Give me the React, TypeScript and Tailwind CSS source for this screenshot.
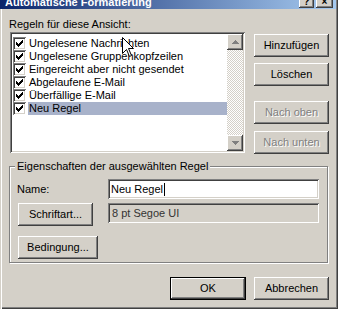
import React from "react";

const raised =
  "bg-[#d4d0c8] shadow-[inset_-1px_-1px_0_#404040,inset_1px_1px_0_#ffffff,inset_-2px_-2px_0_#808080]";

function Btn({
  children,
  className = "",
  disabled = false,
  def = false,
}: {
  children: React.ReactNode;
  className?: string;
  disabled?: boolean;
  def?: boolean;
}) {
  if (def) {
    return (
      <div className={`border border-black ${className}`}>
        <div
          className={`${raised} flex h-full w-full items-center justify-center text-black`}
        >
          {children}
        </div>
      </div>
    );
  }
  return (
    <div
      className={`${raised} flex items-center justify-center ${
        disabled ? "text-[#808080] [text-shadow:1px_1px_0_#ffffff]" : "text-black"
      } ${className}`}
    >
      {children}
    </div>
  );
}

function Check() {
  return (
    <div className="h-[13px] w-[13px] shrink-0 bg-white shadow-[inset_1px_1px_0_#808080,inset_-1px_-1px_0_#ffffff,inset_2px_2px_0_#404040,inset_-2px_-2px_0_#d4d0c8] flex items-center justify-center">
      <svg width="7" height="7" viewBox="0 0 7 7" className="block">
        <path
          d="M0 2h1v1h1v1h1v-1h1v-1h1v-1h1v-1h1v3h-1v1h-1v1h-1v1h-1v1h-1v-1h-1v-1h-1v-1h-1z"
          fill="#000"
        />
      </svg>
    </div>
  );
}

function Arrow({ up }: { up: boolean }) {
  return (
    <div className={`${raised} flex h-[16px] w-[16px] items-center justify-center`}>
      <svg width="7" height="4" viewBox="0 0 7 4" className="block">
        {up ? (
          <path d="M3 0h1v1h1v1h1v1h1v1h-7v-1h1v-1h1v-1h1z" fill="#808080" />
        ) : (
          <path d="M0 0h7v1h-1v1h-1v1h-1v1h-1v-1h-1v-1h-1v-1h-1z" fill="#808080" />
        )}
      </svg>
    </div>
  );
}

const rules = [
  "Ungelesene Nachrichten",
  "Ungelesene Gruppenkopfzeilen",
  "Eingereicht aber nicht gesendet",
  "Abgelaufene E-Mail",
  "Überfällige E-Mail",
  "Neu Regel",
];

export default function App() {
  return (
    <div
      className="relative flex h-[309px] w-[338px] flex-col overflow-hidden bg-[#d4d0c8] text-[11px] leading-[13px] text-black shadow-[inset_1px_0_0_#d4d0c8,inset_2px_0_0_#ffffff,inset_-1px_-1px_0_#404040,inset_-2px_-2px_0_#808080]"
      style={{ fontFamily: '"Liberation Sans", Arial, sans-serif' }}
    >
      {/* title bar */}
      <div className="h-[9px] w-[336px] overflow-hidden bg-[linear-gradient(to_right,#0a246a,#a6caf0)]">
        <div className="mt-[-7px] flex h-[18px] items-center pl-[5px] pr-[3px]">
          <span className="flex-1 text-[11px] font-bold leading-[18px] text-white">
            Automatische Formatierung
          </span>
          <div className={`${raised} mt-[-2px] flex h-[14px] w-[15px] items-center justify-center text-[10px] font-bold`}>
            ?
          </div>
          <div className={`${raised} ml-[2px] mt-[-2px] flex h-[14px] w-[17px] items-center justify-center text-[10px] font-bold`}>
            ×
          </div>
        </div>
      </div>

      <div className="mt-[9px] pl-[9px]">Regeln für diese Ansicht:</div>

      <div className="mt-[1px] flex pl-[10px]">
        {/* listbox */}
        <div className="flex h-[121px] w-[235px] bg-white shadow-[inset_1px_1px_0_#808080,inset_-1px_-1px_0_#ffffff,inset_2px_2px_0_#404040,inset_-2px_-2px_0_#d4d0c8] p-[2px]">
          <div className="flex-1 pl-[1px] pt-[3px]">
            {rules.map((r, i) => (
              <div key={r} className="flex h-[13px] items-center">
                <Check />
                <div
                  className={`ml-[2px] flex h-[13px] flex-1 items-center pl-[1px] ${
                    i === rules.length - 1 ? "bg-[#a8b2ca]" : ""
                  }`}
                >
                  {r}
                </div>
              </div>
            ))}
          </div>
          <div className="flex w-[16px] flex-col bg-[image:repeating-conic-gradient(#d4d0c8_0_25%,#ffffff_0_50%)] bg-[length:2px_2px]">
            <Arrow up />
            <div className="flex-1" />
            <Arrow up={false} />
          </div>
        </div>

        {/* right buttons */}
        <div className="ml-[9px] flex flex-col pt-[2px]">
          <Btn className="h-[23px] w-[75px]">Hinzufügen</Btn>
          <Btn className="mt-[6px] h-[23px] w-[75px]">Löschen</Btn>
          <Btn disabled className="mt-[15px] h-[23px] w-[75px]">
            Nach oben
          </Btn>
          <Btn disabled className="mt-[7px] h-[23px] w-[75px]">
            Nach unten
          </Btn>
        </div>
      </div>

      {/* group box */}
      <div className="relative ml-[9px] mt-[12px] h-[97px] w-[319px] border border-[#808080] shadow-[1px_1px_0_#ffffff,inset_1px_1px_0_#ffffff] pl-[7px] pt-[12px]">
        <div className="absolute left-[5px] top-[-7px] bg-[#d4d0c8] px-[2px]">
          Eigenschaften der ausgewählten Regel
        </div>
        <div className="flex items-center">
          <div className="w-[91px]">Name:</div>
          <div className="flex h-[20px] w-[211px] items-center bg-white pl-[3px] shadow-[inset_1px_1px_0_#808080,inset_-1px_-1px_0_#ffffff,inset_2px_2px_0_#404040,inset_-2px_-2px_0_#d4d0c8]">
            Neu Regel
            <span className="ml-[1px] inline-block h-[13px] w-[1px] bg-black" />
          </div>
        </div>
        <div className="mt-[4px] flex items-start">
          <Btn className="ml-[1px] h-[23px] w-[75px]">Schriftart...</Btn>
          <div className="ml-[15px] flex h-[20px] w-[211px] items-center pl-[4px] text-[#333333] shadow-[inset_1px_1px_0_#808080,inset_-1px_-1px_0_#ffffff,inset_2px_2px_0_#404040,inset_-2px_-2px_0_#d4d0c8]">
            8 pt Segoe UI
          </div>
        </div>
        <div className="mt-[10px] flex">
          <Btn className="ml-[1px] h-[23px] w-[80px]">Bedingung...</Btn>
        </div>
      </div>

      {/* bottom buttons */}
      <div className="mt-[14px] flex justify-end pr-[9px]">
        <Btn def className="h-[23px] w-[76px]">
          OK
        </Btn>
        <Btn className="ml-[8px] h-[23px] w-[75px]">Abbrechen</Btn>
      </div>

      {/* mouse cursor */}
      <svg
        className="absolute left-[122px] top-[37px]"
        width="13"
        height="21"
        viewBox="0 0 13 21"
      >
        <path
          d="M0.5 0.5 L0.5 16.5 L4.5 12.5 L7.5 19.5 L9.5 18.5 L6.5 11.5 L11.5 11.5 Z"
          fill="#ffffff"
          stroke="#000000"
          strokeWidth="1"
        />
      </svg>
    </div>
  );
}
